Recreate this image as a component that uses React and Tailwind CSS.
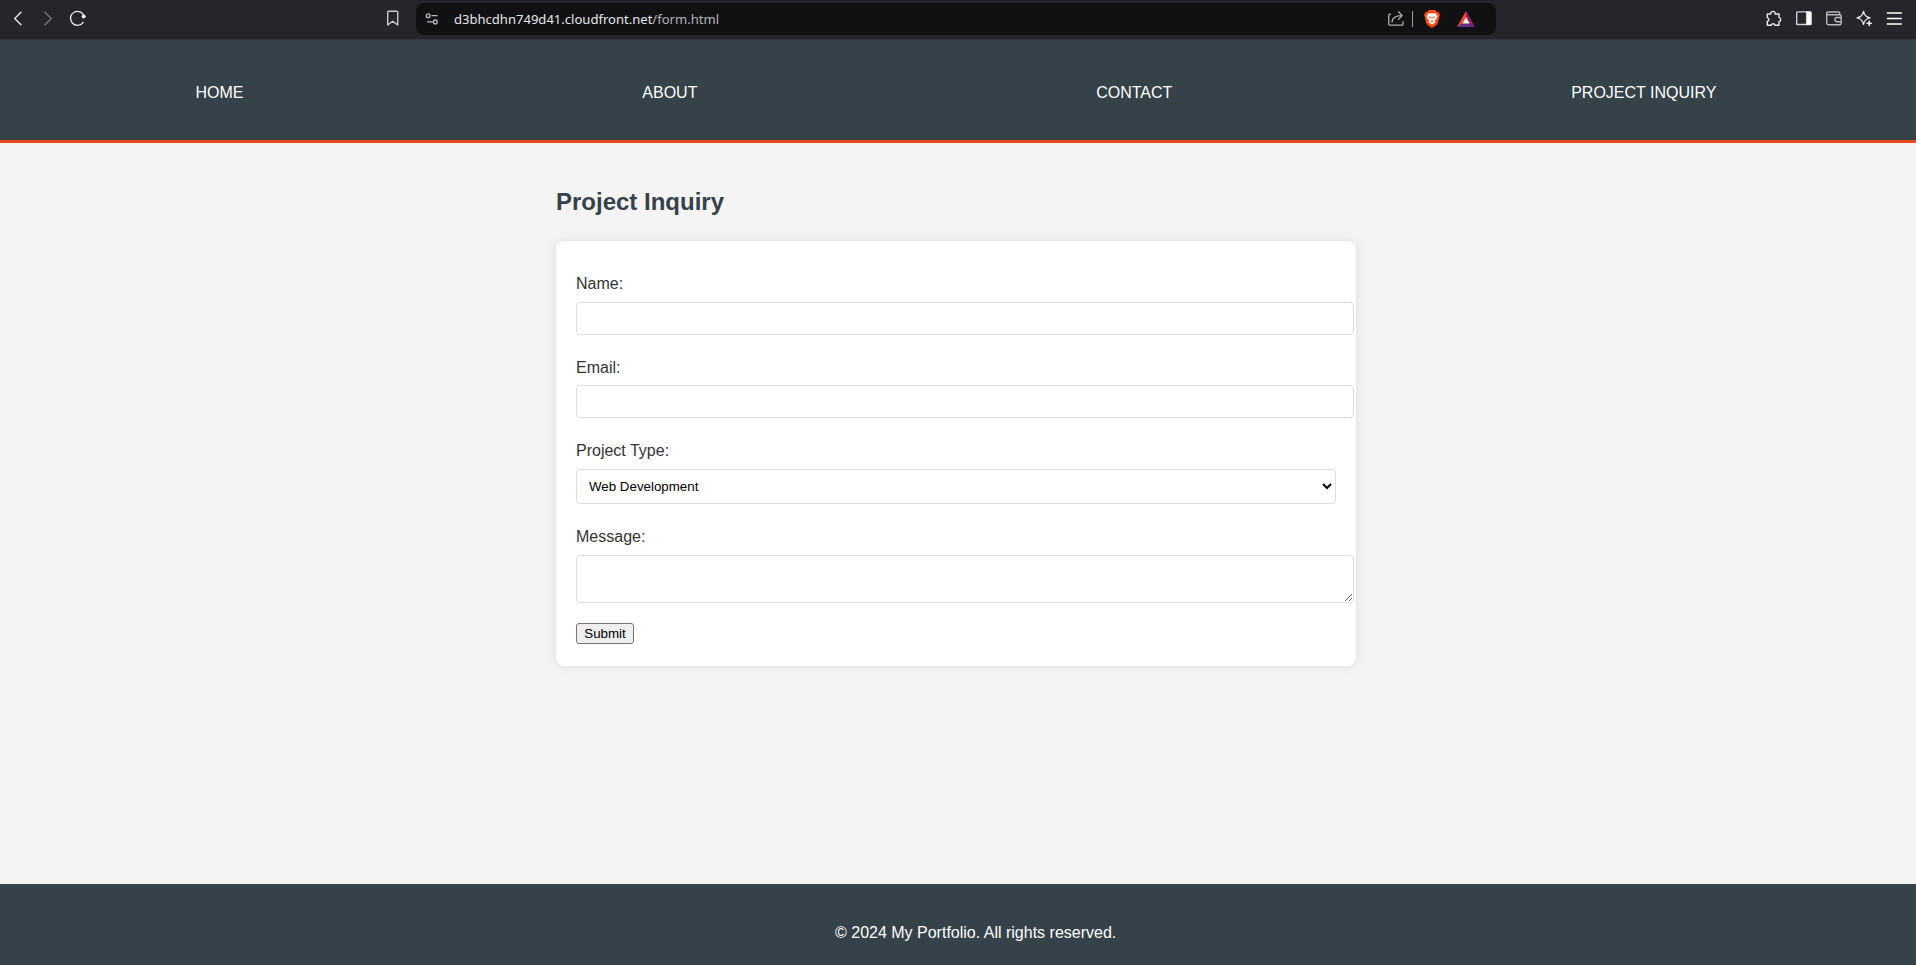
import React from "react";

const stroke = {
  fill: "none",
  stroke: "currentColor",
  strokeLinecap: "round",
  strokeLinejoin: "round",
};

function Icon({ children, className = "", width = 1.4 }) {
  return (
    <svg viewBox="0 0 20 20" className={`size-5 shrink-0 ${className}`} {...stroke} strokeWidth={width}>
      {children}
    </svg>
  );
}

function BrowserBar() {
  return (
    <div className="flex h-10 items-center border-b border-[#35343a] bg-[#26252b] pb-px text-[#e9e9ec]">
      <div className="flex w-[383px] shrink-0 items-center gap-[10px] pl-2">
        <Icon><path d="M13 3.2 6.7 9.500l6.300 6.300" /></Icon>
        <Icon className="text-[#77767c]"><path d="M7 3.200l6.300 6.300L7 15.800" /></Icon>
        <Icon>
          <path d="M15.200 13.400A7 7 0 1 1 16.200 7.500" />
          <circle cx="15.600" cy="7.500" r="1.900" fill="currentColor" stroke="none" />
          <path d="M17.200 7.500h-2.200" />
        </Icon>
      </div>
      <Icon className="text-[#c9c9cd]">
        <path d="M5.600 2.200h8.200a.9.900 0 0 1 .9.900v12.900l-5-3.700-5 3.700V3.100a.9.900 0 0 1 .9-.9z" />
      </Icon>
      <div className="ml-[13px] flex h-8 w-[1080px] shrink-0 items-center rounded-lg bg-[#111113] pl-1.5">
        <Icon className="text-[#bdbdc2]" width={1.3}>
          <circle cx="6.200" cy="6.700" r="1.900" />
          <path d="M10 6.700h5" />
          <path d="M5.700 12.900h4.600" />
          <circle cx="13.300" cy="12.900" r="1.900" />
        </Icon>
        <span className="ml-3 w-[924px] shrink-0 whitespace-nowrap font-['Noto_Sans',sans-serif] text-[13.05px] leading-5 text-[#e6e6e9]">
          d3bhcdhn749d41.cloudfront.net<span className="text-[#b4b4b9]">/form.html</span>
        </span>
        <Icon className="ml-[8px] text-[#b0b0b5]" width={1.3}>
          <path d="M4.600 5.200H3.800a1 1 0 0 0-1 1v9a1 1 0 0 0 1 1H16a1 1 0 0 0 1-1v-2.600" />
          <path d="M6 12.900c.3-4 3-6.300 9.700-6.300M12.500 2.800l3.700 3.800-3.700 3.800" />
        </Icon>
        <span className="ml-[6px] h-4 w-px bg-[#9a9a9f]" />
        <svg viewBox="0 0 16 18" className="ml-[11px] h-[18px] w-4 shrink-0">
          <path d="M5 0h6l1.700 1.800L14.600 2 16 5l-.6 1.600L13.800 13c-.3 1-.8 1.600-1.600 2.200L8 18l-4.200-2.800C3 14.600 2.500 14 2.200 13L.6 6.600 0 5l1.400-3 1.900-.2z" fill="#fb4a12" />
          <path d="M5 2.900 8 3.500l3-.6 2.500 3-.9 2.500-2 2.300.9 1.600L8 14.600l-3.500-2.300.9-1.600-2-2.300-.9-2.500z" fill="#fff" />
          <path d="M4.200 6.300l2.500.7-.4 1.700zM11.800 6.300l-2.500.7.4 1.700zM6.400 11.300 8 10.400l1.600.9L8 12.300z" fill="#fb4a12" />
          <path d="M8 6v3.500" stroke="#fb4a12" strokeWidth=".7" />
        </svg>
        <svg viewBox="0 0 18 16" className="ml-[17px] h-4 w-[18px] shrink-0">
          <path d="M9 0v6.200L5.400 12.400 0 16z" fill="#ff4724" />
          <path d="M9 0l9 16-5.400-3.600L9 6.200z" fill="#9e1f63" />
          <path d="M0 16l5.400-3.600h7.200L18 16z" fill="#662d91" />
          <path d="M9 6.200l3.600 6.200H5.400z" fill="#fff" />
        </svg>
      </div>
      <div className="ml-auto flex gap-[10px] pr-3">
        <Icon>
          <path d="M3.300 5h3.500a2.200 2.200 0 1 1 4.300 0h3.900v3.400a2.200 2.200 0 0 1 0 4.300v3.600h-3.900a2 2 0 0 0-3.900 0H3.300v-3.800a2 2 0 0 0 0-3.900z" />
        </Icon>
        <Icon className="text-[#cfcfd3]">
          <rect x="2.700" y="2.900" width="14.400" height="12.600" rx=".8" />
          <path d="M12.800 3h4v12.400h-4z" fill="#fff" stroke="#fff" strokeWidth=".8" />
        </Icon>
        <Icon className="text-[#b9b9bd]">
          <path d="M15.700 5.700V4a1 1 0 0 0-1-1H4a1.300 1.300 0 0 0 0 2.700h12a1.100 1.100 0 0 1 1.100 1.100v7.600a1.300 1.300 0 0 1-1.300 1.300H4.400A1.700 1.700 0 0 1 2.700 14V4.400" />
          <path d="M17 8.500h-4a2.100 2.100 0 0 0 0 4.200h4" />
        </Icon>
        <Icon>
          <path d="M9.500 2.500c.9 4 2.300 5.400 6.500 6.400-4.200 1-5.600 2.400-6.500 6.500-.9-4.100-2.300-5.500-6.500-6.500C7.200 7.900 8.600 6.500 9.500 2.500z" />
          <path d="M15.200 12.200v4.200M13.100 14.300h4.200" strokeWidth="1.600" />
        </Icon>
        <Icon className="text-white">
          <path d="M3.300 4h14M3.300 9.500h14M3.300 15h14" />
        </Icon>
      </div>
    </div>
  );
}

const links = ["HOME", "ABOUT", "CONTACT", "PROJECT INQUIRY"];

function Field({ label, labelClass = "mb-1.5", children }) {
  return (
    <div className="mb-5 flex flex-col items-start">
      <label className={`h-[25px] text-base leading-[25px] ${labelClass}`}>{label}</label>
      {children}
    </div>
  );
}

export default function App() {
  return (
    <div className="flex h-[965px] flex-col overflow-hidden bg-[#f4f4f4] font-['Liberation_Sans',Arial,sans-serif] text-base text-[#333]">
      <BrowserBar />
      <header className="h-[103px] shrink-0 border-b-[3px] border-[#e8491d] bg-[#35424a] pt-[41px] text-white">
        <nav className="flex gap-[398.800px] whitespace-nowrap pl-[195.500px] leading-6">
          {links.map((l) => (
            <a key={l} href="#">{l}</a>
          ))}
        </nav>
      </header>
      <main className="ml-[556px] w-[800px] flex-1 pt-[39px]">
        <h2 className="mb-5 h-[39px] text-2xl font-bold leading-[39px] text-[#35424a]">Project Inquiry</h2>
        <form className="h-[425px] rounded-lg bg-white px-5 pt-[30px] shadow-[0_0_10px_rgba(0,0,0,0.1)]">
          <Field label="Name:">
            <input type="text" className="h-[33px] w-[778px] rounded border border-[#ddd] px-2" />
          </Field>
          <Field label="Email:" labelClass="mb-[5px]">
            <input type="email" className="h-[33px] w-[778px] rounded border border-[#ddd] px-2" />
          </Field>
          <Field label="Project Type:">
            <select className="h-[35px] w-[760px] rounded border border-[#ddd] bg-white px-2 text-[13.333px] text-black">
              <option>Web Development</option>
              <option>Mobile App</option>
            </select>
          </Field>
          <Field label="Message:">
            <textarea className="h-12 w-[778px] rounded border border-[#ddd] p-2" />
          </Field>
          <button type="button" className="flex h-[21px] w-[58px] items-center justify-center rounded-[3px] border border-[#767676] bg-[#efefef] text-[13.333px] text-black">
            Submit
          </button>
        </form>
      </main>
      <footer className="h-[81px] shrink-0 bg-[#35424a] pl-[835px] pt-[37px] leading-6 text-white">
        <p>© 2024 My Portfolio. All rights reserved.</p>
      </footer>
    </div>
  );
}
